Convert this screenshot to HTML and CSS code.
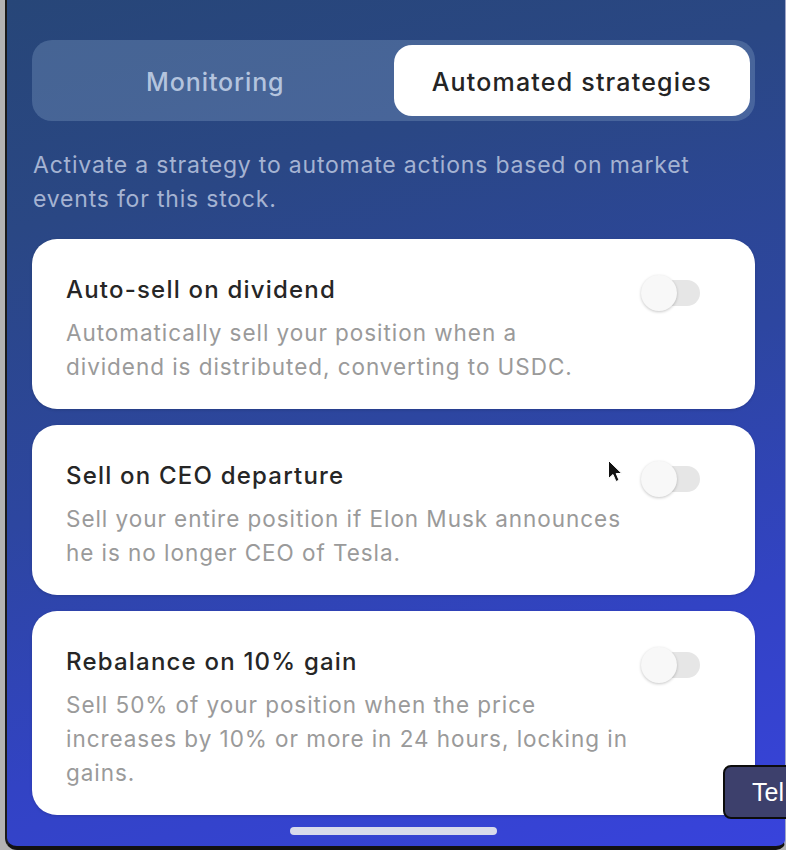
FILE: index.html
```html
<!DOCTYPE html>
<html lang="en">
<head>
<meta charset="utf-8">
<title>Automated strategies</title>
<link rel="stylesheet" href="styles.css">
</head>
<body>
<div class="device">
  <div class="screen">
    <div class="segmented">
      <div class="seg">Monitoring</div>
      <div class="seg active">Automated strategies</div>
    </div>
    <p class="intro">Activate a strategy to automate actions based on market<br>events for this stock.</p>
    <div class="cards">
      <div class="card">
        <div class="card-text">
          <h3 class="card-title">Auto-sell on dividend</h3>
          <p class="card-desc">Automatically sell your position when a<br>dividend is distributed, converting to USDC.</p>
        </div>
        <div class="switch"><span class="knob"></span></div>
      </div>
      <div class="card">
        <div class="card-text">
          <h3 class="card-title">Sell on CEO departure</h3>
          <p class="card-desc">Sell your entire position if Elon Musk announces<br>he is no longer CEO of Tesla.</p>
        </div>
        <div class="switch"><span class="knob"></span></div>
      </div>
      <div class="card">
        <div class="card-text">
          <h3 class="card-title">Rebalance on 10% gain</h3>
          <p class="card-desc">Sell 50% of your position when the price<br>increases by 10% or more in 24 hours, locking in<br>gains.</p>
        </div>
        <div class="switch"><span class="knob"></span></div>
      </div>
    </div>
    <div class="home-indicator"></div>
  </div>
  <div class="tooltip">Tel</div>
  <svg class="cursor" width="16" height="26" viewBox="0 0 16 26" aria-hidden="true">
    <path d="M1.5 1.5 L1.5 19.5 L6 15.5 L9 22.5 L12 21.2 L9.2 14.5 L14.8 14.5 Z" fill="#111" stroke="#fff" stroke-width="1" stroke-linejoin="round"/>
  </svg>
</div>
</body>
</html>
```
FILE: styles.css
```css
* { box-sizing: border-box; }

html, body {
  margin: 0;
  padding: 0;
  height: 850px;
  overflow: hidden;
}

body {
  background: #b3b3b3;
  font-family: Inter, "Noto Sans", sans-serif;
}

.device {
  position: relative;
  height: 850px;
  padding-left: 5px;
  display: flex;
}

.screen {
  flex: 1;
  height: 850px;
  display: flex;
  flex-direction: column;
  padding: 40px 30px 0 25px;
  background: linear-gradient(165deg, #274678 0%, #2a4784 22%, #2d46a0 50%, #3243c4 75%, #3843dc 100%);
  border-left: 2px solid #1a1a1a;
  border-bottom: 4px solid #111;
  border-right: 1px solid #9fa6c8;
  border-bottom-left-radius: 12px;
  border-bottom-right-radius: 10px;
}

.segmented {
  display: grid;
  grid-template-columns: 1fr 1fr;
  height: 81px;
  padding: 5px;
  border-radius: 20px;
  background: rgba(120, 150, 190, 0.38);
}

.seg {
  display: flex;
  align-items: center;
  justify-content: center;
  padding-top: 3px;
  font-size: 25px;
  font-weight: 500;
  color: #b4c4de;
  letter-spacing: 0.9px;
  border-radius: 18px;
}

.seg.active {
  background: #fff;
  color: #242424;
  letter-spacing: 1.2px;
}

.intro {
  margin: 27px 0 0 1px;
  font-size: 23px;
  line-height: 34px;
  color: #a5b3d2;
  letter-spacing: 0.8px;
}

.cards {
  display: flex;
  flex-direction: column;
  gap: 16px;
  margin-top: 23px;
}

.card {
  display: flex;
  align-items: flex-start;
  justify-content: space-between;
  background: #fff;
  border-radius: 25px;
  padding: 36px 55px 25px 34px;
  box-shadow: 0 1px 3px rgba(0, 0, 0, 0.15);
}

.card-title {
  margin: 0;
  font-size: 24px;
  line-height: 30px;
  font-weight: 500;
  color: #262626;
  letter-spacing: 1.2px;
}

.card-desc {
  margin: 11px 0 0;
  font-size: 22.5px;
  line-height: 34px;
  color: #9a9a9a;
  letter-spacing: 0.95px;
}

.switch {
  position: relative;
  flex: none;
  width: 58px;
  height: 26px;
  margin-top: 5px;
  border-radius: 13px;
  background: #e6e6e6;
}

.knob {
  position: absolute;
  left: -1px;
  top: -5px;
  width: 36px;
  height: 36px;
  border-radius: 50%;
  background: #f8f8f8;
  box-shadow: 0 1px 3px rgba(0, 0, 0, 0.22);
}

.home-indicator {
  align-self: center;
  width: 207px;
  height: 8px;
  margin-top: auto;
  margin-bottom: 11px;
  border-radius: 4px;
  background: #d8dbeb;
}

.tooltip {
  position: absolute;
  left: 723px;
  top: 765px;
  width: 100px;
  height: 54px;
  padding-left: 27px;
  display: flex;
  align-items: center;
  background: #3d406c;
  border: 2px solid #0c0c0c;
  border-radius: 8px;
  color: #fff;
  font-family: "Liberation Sans", Arial, sans-serif;
  font-size: 25px;
}

.cursor {
  position: absolute;
  left: 607px;
  top: 459px;
}
```
